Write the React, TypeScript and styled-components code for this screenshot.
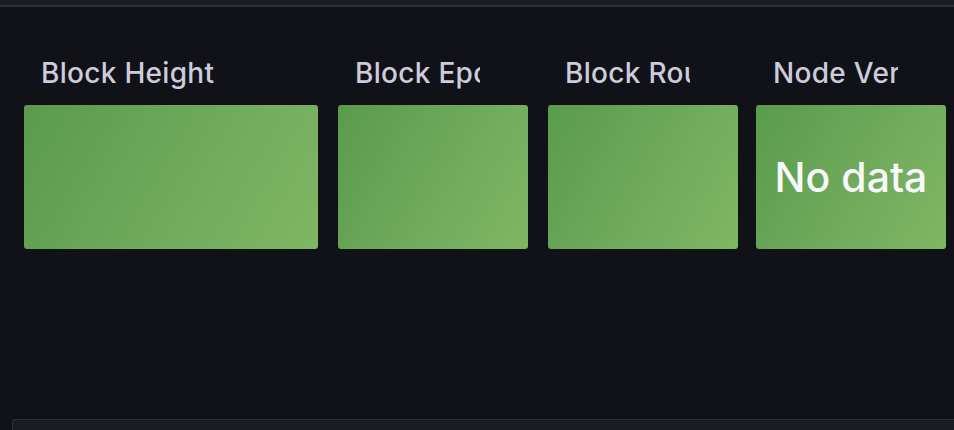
import React from "react";
import styled, { createGlobalStyle } from "styled-components";

const GlobalStyle = createGlobalStyle`
  html, body {
    margin: 0;
    padding: 0;
    background: #111217;
    overflow: hidden;
  }
  body {
    font-family: Inter, "Noto Sans", sans-serif;
  }
`;

const panels = [
  { title: "Block Height", width: 294, offset: 0, value: "" },
  { title: "Block Epoch", width: 190, offset: 20, value: "" },
  { title: "Block Round", width: 190, offset: 20, value: "" },
  { title: "Node Version", width: 190, offset: 18, value: "No data" },
];

const App = () => {
  return (
    <Page>
      <GlobalStyle />
      <TopStrip />
      <Row>
        {panels.map((p) => (
          <Panel key={p.title} width={p.width} offset={p.offset}>
            <Header>
              <Title>{p.title}</Title>
            </Header>
            <StatCard>{p.value && <StatValue>{p.value}</StatValue>}</StatCard>
          </Panel>
        ))}
      </Row>
      <BottomPanel />
    </Page>
  );
};

export default App;

const Page = styled.div`
  width: 954px;
  height: 430px;
  overflow: hidden;
  background: #111217;
  display: flex;
  flex-direction: column;
`;

const TopStrip = styled.div`
  height: 5px;
  flex-shrink: 0;
  background: #1b1c21;
  border-bottom: 2px solid #303137;
`;

const Row = styled.div`
  display: flex;
  padding: 40px 0 0 24px;
  height: 412px;
  box-sizing: border-box;
  flex-shrink: 0;
`;

interface panelProps {
  width: number;
  offset: number;
}

const Panel = styled.div<panelProps>`
  display: flex;
  flex-direction: column;
  width: ${(props) => props.width}px;
  margin-left: ${(props) => props.offset}px;
  flex-shrink: 0;
`;

const Header = styled.div`
  height: 58px;
  display: flex;
  align-items: flex-start;
  padding: 10px 48px 0 17px;
  box-sizing: border-box;
  overflow: hidden;
`;

const Title = styled.span`
  font-size: 28px;
  font-weight: 500;
  letter-spacing: 0.3px;
  color: #ccccdc;
  white-space: nowrap;
  overflow: hidden;
  line-height: 32px;
`;

const StatCard = styled.div`
  height: 144px;
  border-radius: 3px;
  background: linear-gradient(120deg, #5a9b4c 0%, #6ea95a 50%, #7fb664 100%);
  display: flex;
  align-items: center;
  justify-content: center;
`;

const StatValue = styled.span`
  font-size: 41px;
  font-weight: 500;
  color: #f7f8fa;
  white-space: nowrap;
`;

const BottomPanel = styled.div`
  flex: 1;
  margin-left: 12px;
  background: #1b1c21;
  border-top: 1px solid #303137;
  border-left: 1px solid #303137;
  border-top-left-radius: 3px;
`;
